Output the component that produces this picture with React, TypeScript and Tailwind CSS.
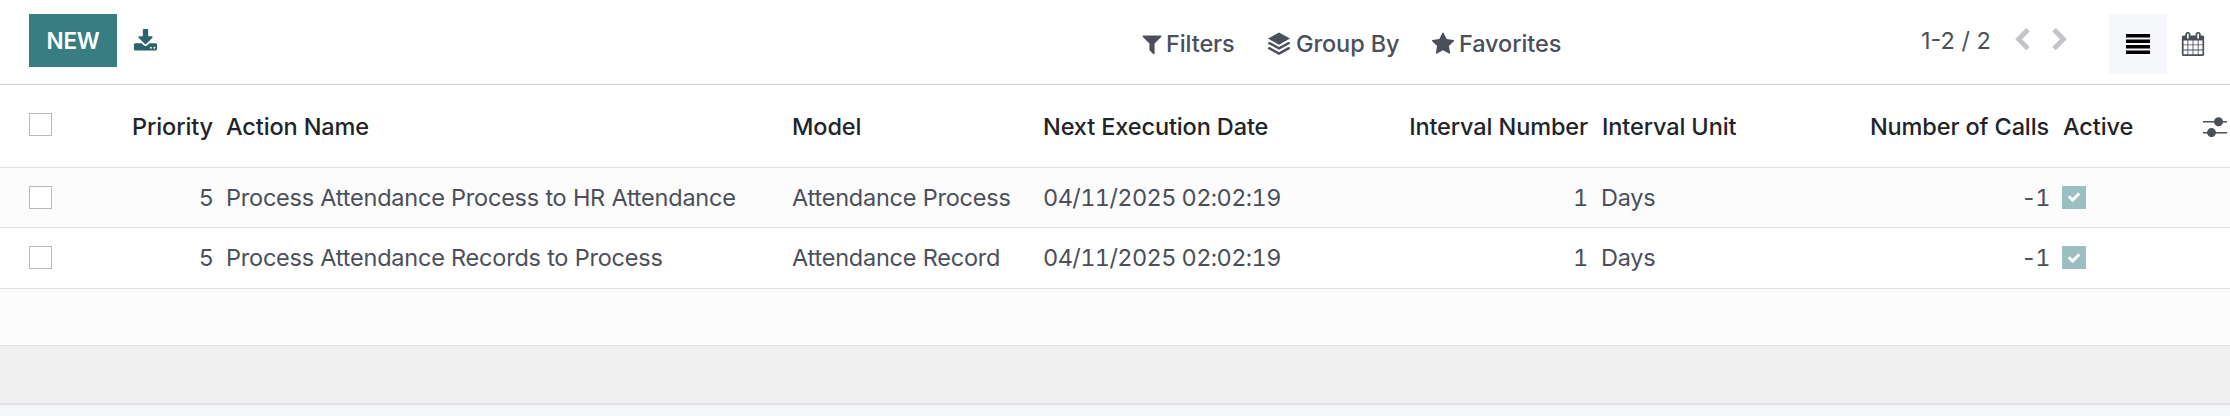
import React from "react";

const paths = {
  download:
    "M1344 1344q0-26-19-45t-45-19-45 19-19 45 19 45 45 19 45-19 19-45zm256 0q0-26-19-45t-45-19-45 19-19 45 19 45 45 19 45-19 19-45zm128-224v320q0 40-28 68t-68 28h-1472q-40 0-68-28t-28-68v-320q0-40 28-68t68-28h465l135 136q58 56 136 56t136-56l136-136h464q40 0 68 28t28 68zm-325-569q17 41-14 70l-448 448q-18 19-45 19t-45-19l-448-448q-31-29-14-70 17-39 59-39h256v-448q0-26 19-45t45-19h256q26 0 45 19t19 45v448h256q42 0 59 39z",
  filter:
    "M1595 295q17 41-14 70l-493 493v742q0 42-39 59-13 5-25 5-27 0-45-19l-256-256q-19-19-19-45v-486l-493-493q-31-29-14-70 17-39 59-39h1280q42 0 59 39z",
  star: "M1728 647q0 22-26 48l-363 354 86 500q1 7 1 20 0 21-10.5 35.5t-30.5 14.5q-19 0-40-12l-449-236-449 236q-22 12-40 12-21 0-31.5-14.5t-10.5-35.5q0-6 2-20l86-500-364-354q-25-27-25-48 0-37 56-46l502-73 225-455q19-41 49-41t49 41l225 455 502 73q56 9 56 46z",
  left: "M1427 301l-531 531 531 531q19 19 19 45t-19 45l-166 166q-19 19-45 19t-45-19l-742-742q-19-19-19-45t19-45l742-742q19-19 45-19t45 19l166 166q19 19 19 45t-19 45z",
  right:
    "M1363 877l-742 742q-19 19-45 19t-45-19l-166-166q-19-19-19-45t19-45l531-531-531-531q-19-19-19-45t19-45l166-166q19-19 45-19t45 19l742 742q19 19 19 45t-19 45z",
  calendar:
    "M192 1664h288v-288h-288v288zm352 0h320v-288h-320v288zm-352-352h288v-320h-288v320zm352 0h320v-320h-320v320zm-352-384h288v-288h-288v288zm736 736h320v-288h-320v288zm-384-736h320v-288h-320v288zm768 736h288v-288h-288v288zm-384-352h320v-320h-320v320zm-352-864v-288q0-13-9.5-22.5t-22.5-9.5h-64q-13 0-22.5 9.5t-9.5 22.5v288q0 13 9.5 22.5t22.5 9.5h64q13 0 22.5-9.5t9.5-22.5zm736 864h288v-320h-288v320zm-384-384h320v-288h-320v288zm384 0h288v-288h-288v288zm32-480v-288q0-13-9.5-22.5t-22.5-9.5h-64q-13 0-22.5 9.5t-9.5 22.5v288q0 13 9.5 22.5t22.5 9.5h64q13 0 22.5-9.5t9.5-22.5zm384-64v1280q0 52-38 90t-90 38h-1408q-52 0-90-38t-38-90v-1280q0-52 38-90t90-38h128v-96q0-66 47-113t113-47h64q66 0 113 47t47 113v96h384v-96q0-66 47-113t113-47h64q66 0 113 47t47 113v96h128q52 0 90 38t38 90z",
  check:
    "M1671 566q0 40-28 68l-724 724-136 136q-28 28-68 28t-68-28l-136-136-362-362q-28-28-28-68t28-68l136-136q28-28 68-28t68 28l294 295 656-657q28-28 68-28t68 28l136 136q28 28 28 68z",
};

function Icon({ name, className }: { name: keyof typeof paths; className: string }) {
  return (
    <svg viewBox="0 0 1792 1792" fill="currentColor" className={`shrink-0 ${className}`}>
      <path d={paths[name]} />
    </svg>
  );
}

function Checkbox() {
  return <span className="block size-[23px] border border-[#b9b9bb] bg-white" />;
}

const grid =
  "grid grid-cols-[29px_184px_13px_566px_250px_360px_186px_14px_246px_201px_14px_140px_27px]";

const rows = [
  { name: "Process Attendance Process to HR Attendance", model: "Attendance Process", cls: "h-15 bg-[#fcfcfc]" },
  { name: "Process Attendance Records to Process", model: "Attendance Record", cls: "h-[61px] bg-white" },
];

export default function App() {
  return (
    <div className="flex h-[416px] w-[2230px] flex-col overflow-hidden bg-[#f5f7fb] font-['Inter',sans-serif] text-[23.5px] leading-8 whitespace-nowrap">
      <header className="flex h-[85px] shrink-0 items-start border-b border-[#c9c9d1] bg-white pt-[14px] pl-[29px]">
        <button className="flex h-[53px] w-[88px] items-center justify-center bg-[#377d82] text-[22.5px] font-semibold tracking-[-0.3px] text-white">
          NEW
        </button>
        <Icon name="download" className="mt-[15px] ml-4 size-[25px] text-[#2b656b]" />
        <nav className="ml-[982px] flex h-15 w-[640px] items-center font-medium tracking-[-0.1px] text-[#4b4f59]">
          <span className="flex w-[127px] items-center gap-0.5">
            <Icon name="filter" className="size-6" />
            Filters
          </span>
          <span className="flex w-[164px] items-center gap-[5px]">
            <svg viewBox="0 0 24 24" fill="currentColor" className="size-6 shrink-0">
              <path d="M12 0.5 23 6.6 12 12.8 1 6.6Z" />
              <path d="M1 10.4 2.8 9.9 12 15 21.2 9.9 23 10.4V11.7L12 17.8 1 11.7Z" />
              <path d="M1 15.6 2.8 15.1 12 20.2 21.2 15.1 23 15.6V16.9L12 23 1 16.9Z" />
            </svg>
            Group By
          </span>
          <span className="flex items-center gap-1">
            <Icon name="star" className="size-6" />
            Favorites
          </span>
        </nav>
        <div className="ml-[141px] flex h-[54px] w-[188px] items-center text-[#4b4f59]">
          <span className="w-[89px]">1-2 / 2</span>
          <Icon name="left" className="-mt-0.5 size-6 text-[#c3c4c9]" />
          <Icon name="right" className="-mt-0.5 ml-[14px] size-6 text-[#c3c4c9]" />
        </div>
        <div className="flex h-15 w-[58px] items-center justify-center bg-[#f5f7fb]">
          <svg viewBox="0 0 24 20" className="h-5 w-6 fill-black">
            <path d="M0 0h24v3.5H0zM0 5.5h24V9H0zM0 11h24v3.5H0zM0 16.5h24V20H0z" />
          </svg>
        </div>
        <Icon name="calendar" className="mt-[18px] ml-[14px] size-6 text-[#4b4f59]" />
      </header>

      <div
        className={`${grid} h-[83px] shrink-0 items-center border-b border-[#dee0e4] bg-white pt-0.5 font-medium tracking-[-0.12px] text-[#212529]`}
      >
        <span />
        <span className="flex items-center justify-between">
          <span className="-mt-1.5">
            <Checkbox />
          </span>
          Priority
        </span>
        <span />
        <span>Action Name</span>
        <span>Model</span>
        <span className="pl-px">Next Execution Date</span>
        <span className="text-right">Interval Number</span>
        <span />
        <span>Interval Unit</span>
        <span className="text-right">Number of Calls</span>
        <span />
        <span>Active</span>
        <svg viewBox="0 0 24 20" className="h-5 w-6" fill="#4b4f59">
          <path d="M0 4h24v1.6H0zM0 15h24v1.6H0z" />
          <circle cx="15.5" cy="4.8" r="4.5" />
          <circle cx="8.5" cy="15.6" r="4.5" />
        </svg>
      </div>

      {rows.map((r) => (
        <div
          key={r.name}
          className={`${grid} ${r.cls} shrink-0 items-center border-b border-[#dee0e4] tracking-[-0.22px] text-[#4b4f59]`}
        >
          <span />
          <span className="flex items-center justify-between">
            <span className="-mt-px">
              <Checkbox />
            </span>
            5
          </span>
          <span />
          <span>{r.name}</span>
          <span>{r.model}</span>
          <span className="pl-px tracking-[-0.6px] tabular-nums">04/11/2025 02:02:19</span>
          <span className="text-right tabular-nums">1</span>
          <span />
          <span className="-ml-px">Days</span>
          <span className="text-right tracking-[-1.4px] tabular-nums">-1</span>
          <span />
          <span className="-mt-px -ml-px flex h-[23px] w-6 items-center justify-center bg-[#9bbec1]">
            <Icon name="check" className="size-[14px] text-white" />
          </span>
          <span />
        </div>
      ))}

      <div className="h-[57px] shrink-0 border-b border-[#dee0e4] bg-[#fcfcfc]" />
      <div className="h-[59px] shrink-0 border-b-2 border-[#e1e2e8] bg-[#f0f0f0]" />
    </div>
  );
}
